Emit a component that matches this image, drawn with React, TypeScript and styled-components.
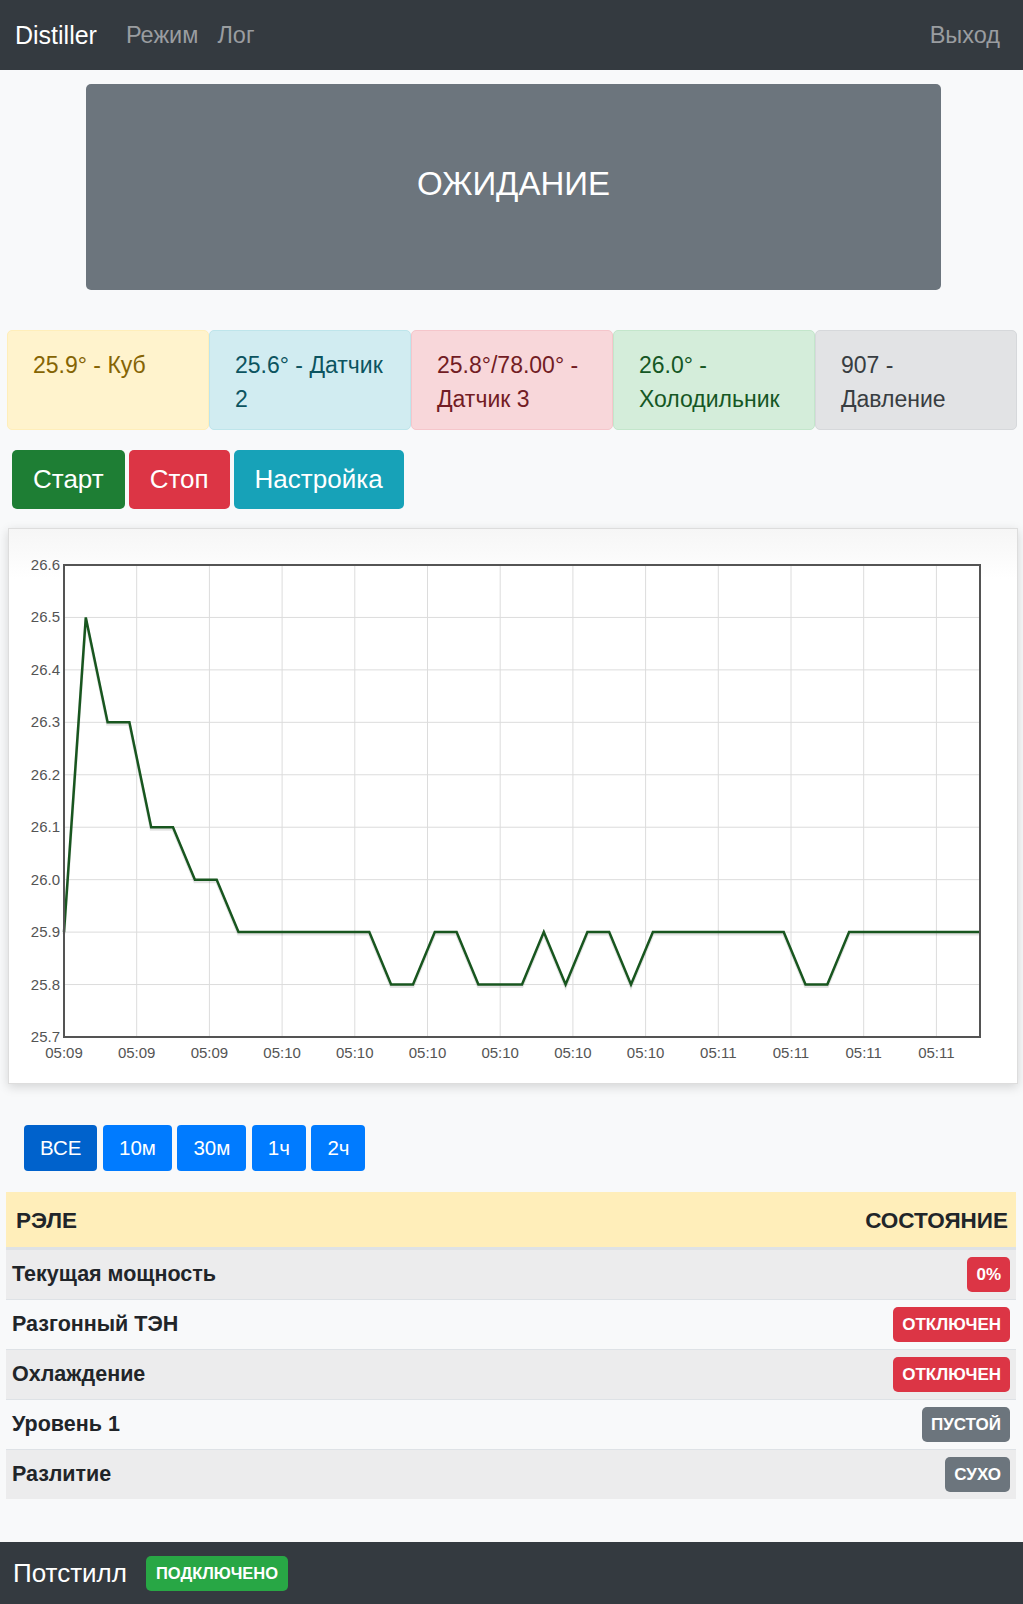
import React from 'react';
import styled, { createGlobalStyle } from 'styled-components';

type Tone = 'warning' | 'info' | 'danger' | 'success' | 'secondary';

const ALERT_COLORS: Record<Tone, { bg: string; border: string; text: string }> = {
  warning: { bg: '#fff3cd', border: '#ffeeba', text: '#856404' },
  info: { bg: '#d1ecf1', border: '#bee5eb', text: '#0c5460' },
  danger: { bg: '#f8d7da', border: '#f5c6cb', text: '#721c24' },
  success: { bg: '#d4edda', border: '#c3e6cb', text: '#155724' },
  secondary: { bg: '#e2e3e5', border: '#d6d8db', text: '#383d41' },
};

const SENSORS: { id: number; text: string; tone: Tone }[] = [
  { id: 1, text: '25.9° - Куб', tone: 'warning' },
  { id: 2, text: '25.6° - Датчик 2', tone: 'info' },
  { id: 3, text: '25.8°/78.00° - Датчик 3', tone: 'danger' },
  { id: 4, text: '26.0° - Холодильник', tone: 'success' },
  { id: 5, text: '907 - Давление', tone: 'secondary' },
];

const RANGES = ['ВСЕ', '10м', '30м', '1ч', '2ч'];

const RELAYS: { name: string; state: string; color: string }[] = [
  { name: 'Текущая мощность', state: '0%', color: '#dc3545' },
  { name: 'Разгонный ТЭН', state: 'Отключен', color: '#dc3545' },
  { name: 'Охлаждение', state: 'Отключен', color: '#dc3545' },
  { name: 'Уровень 1', state: 'Пустой', color: '#6c757d' },
  { name: 'Разлитие', state: 'Сухо', color: '#6c757d' },
];

// temperature history, one point per sample
const SAMPLES = [
  25.9, 26.5, 26.3, 26.3, 26.1, 26.1, 26.0, 26.0,
  25.9, 25.9, 25.9, 25.9, 25.9, 25.9, 25.9,
  25.8, 25.8, 25.9, 25.9, 25.8, 25.8, 25.8, 25.9, 25.8, 25.9, 25.9, 25.8,
  25.9, 25.9, 25.9, 25.9, 25.9, 25.9, 25.9,
  25.8, 25.8,
  25.9, 25.9, 25.9, 25.9, 25.9, 25.9, 25.9,
];

const X_LABELS = [
  '05:09', '05:09', '05:09',
  '05:10', '05:10', '05:10', '05:10', '05:10', '05:10',
  '05:11', '05:11', '05:11', '05:11',
];

const Y_TICKS = [26.6, 26.5, 26.4, 26.3, 26.2, 26.1, 26.0, 25.9, 25.8, 25.7];

const GlobalStyle = createGlobalStyle`
  body {
    margin: 0;
    background: #f8f9fa;
    font-family: "Liberation Sans", Arial, sans-serif;
    color: #212529;
  }
`;

const Navbar = styled.nav`
  display: flex;
  align-items: center;
  height: 70px;
  padding: 0 23px 0 15px;
  background: #343a40;
`;

const Brand = styled.span`
  font-size: 25px;
  color: #fff;
  margin-right: 29px;
`;

const NavLink = styled.span<{ $push?: boolean }>`
  font-size: 23.5px;
  color: #9a9da0;
  margin-right: 19px;
  margin-left: ${(p) => (p.$push ? 'auto' : '0')};
  &:last-child {
    margin-right: 0;
  }
`;

const StatusBox = styled.div`
  width: 855px;
  height: 206px;
  box-sizing: border-box;
  padding-bottom: 7px;
  margin: 14px auto 0 86px;
  display: flex;
  align-items: center;
  justify-content: center;
  background: #6c757d;
  border-radius: 5px;
  color: #fff;
  font-size: 33px;
`;

const SensorRow = styled.div`
  display: grid;
  grid-template-columns: repeat(5, 1fr);
  margin: 40px 6px 0 7px;
`;

const SensorAlert = styled.div<{ $tone: Tone }>`
  height: 100px;
  box-sizing: border-box;
  padding: 17px 12px 0 25px;
  border: 1px solid ${(p) => ALERT_COLORS[p.$tone].border};
  border-radius: 5px;
  background: ${(p) => ALERT_COLORS[p.$tone].bg};
  color: ${(p) => ALERT_COLORS[p.$tone].text};
  font-size: 23px;
  line-height: 34px;
`;

const ButtonRow = styled.div`
  display: flex;
  gap: 4px;
  margin: 20px 0 0 12px;
`;

const ActionButton = styled.button<{ $bg: string }>`
  height: 59px;
  padding: 0 21px;
  border: none;
  border-radius: 5px;
  background: ${(p) => p.$bg};
  color: #fff;
  font-family: inherit;
  font-size: 26px;
`;

const ChartCard = styled.div`
  width: 1010px;
  height: 556px;
  box-sizing: border-box;
  margin: 19px 0 0 8px;
  border: 1px solid #ddd;
  background: linear-gradient(#f6f6f6 0, #fff 50px);
  box-shadow: 0 3px 10px rgba(0, 0, 0, 0.15);
`;

const ChartSvg = styled.svg`
  display: block;
  font-family: "Liberation Sans", Arial, sans-serif;
`;

const RangeRow = styled.div`
  display: flex;
  gap: 5.5px;
  margin: 41px 0 0 24px;
`;

const RangeButton = styled.button<{ $active?: boolean }>`
  height: 46px;
  padding: 0 16px;
  border: none;
  border-radius: 4px;
  background: ${(p) => (p.$active ? '#0062cc' : '#007bff')};
  color: #fff;
  font-family: inherit;
  font-size: 20.5px;
`;

const RelayTable = styled.div`
  margin: 21px 7px 0 6px;
`;

const HeadRow = styled.div`
  display: flex;
  align-items: center;
  justify-content: space-between;
  height: 53px;
  padding: 2px 8px 0 10px;
  background: #ffeeba;
  border-bottom: 2px solid #dee2e6;
  font-size: 22.5px;
  font-weight: bold;
  text-transform: uppercase;
`;

const BodyRow = styled.div<{ $odd: boolean }>`
  display: flex;
  align-items: center;
  justify-content: space-between;
  height: 49px;
  padding: 0 6px;
  border-top: 1px solid #dee2e6;
  background: ${(p) => (p.$odd ? '#ececed' : '#f8f9fa')};
  font-size: 21.5px;
  font-weight: bold;
  &:first-of-type {
    border-top: none;
  }
`;

const Badge = styled.span<{ $bg: string }>`
  display: inline-flex;
  align-items: center;
  height: 35px;
  padding: 0 9px;
  border-radius: 5px;
  background: ${(p) => p.$bg};
  color: #fff;
  font-size: 17px;
  font-weight: bold;
  text-transform: uppercase;
`;

const Footer = styled.footer`
  display: flex;
  align-items: center;
  gap: 19px;
  height: 63px;
  margin-top: 43px;
  padding: 0 13px;
  background: #343a40;
  color: #fff;
  font-size: 26px;
`;

const ConnBadge = styled.span`
  display: inline-flex;
  align-items: center;
  height: 35px;
  padding: 0 10px;
  border-radius: 5px;
  background: #28a745;
  font-size: 16.5px;
  font-weight: bold;
  text-transform: uppercase;
`;

const W = 1008;
const H = 554;
const PL = 55;
const PT = 36;
const PW = 916;
const PH = 472;

const yOf = (v: number) => PT + ((26.6 - v) / 0.9) * PH;
const xOf = (i: number) => PL + (i * PW) / (SAMPLES.length - 1);

const TempChart = () => {
  const pts = SAMPLES.map((v, i) => `${xOf(i).toFixed(1)},${yOf(v).toFixed(1)}`).join(' ');
  const step = 72.7;
  return (
    <ChartSvg width={W} height={H} viewBox={`0 0 ${W} ${H}`}>
      <rect x={PL} y={PT} width={PW} height={PH} fill="#fff" />
      {Y_TICKS.map((t) => (
        <line key={t} x1={PL} x2={PL + PW} y1={yOf(t)} y2={yOf(t)} stroke="#dcdcdc" strokeWidth={1} />
      ))}
      {X_LABELS.map((_, k) => (
        <line key={k} x1={PL + k * step} x2={PL + k * step} y1={PT} y2={PT + PH} stroke="#dcdcdc" strokeWidth={1} />
      ))}
      <polyline points={pts} fill="none" stroke="rgba(0,0,0,0.1)" strokeWidth={3} transform="translate(0,2)" />
      <polyline points={pts} fill="none" stroke="#18561f" strokeWidth={2.5} strokeLinejoin="miter" />
      <rect x={PL} y={PT} width={PW} height={PH} fill="none" stroke="#545454" strokeWidth={2} />
      {Y_TICKS.map((t) => (
        <text key={t} x={PL - 4} y={yOf(t) + 5} textAnchor="end" fontSize={15} fill="#545454">
          {t.toFixed(1)}
        </text>
      ))}
      {X_LABELS.map((l, k) => (
        <text key={k} x={PL + k * step} y={529} textAnchor="middle" fontSize={15} fill="#545454">
          {l}
        </text>
      ))}
    </ChartSvg>
  );
};

const App = () => {
  return (
    <>
      <GlobalStyle />
      <Navbar>
        <Brand>Distiller</Brand>
        <NavLink>Режим</NavLink>
        <NavLink>Лог</NavLink>
        <NavLink $push>Выход</NavLink>
      </Navbar>

      <StatusBox>ОЖИДАНИЕ</StatusBox>

      <SensorRow>
        {SENSORS.map((s) => (
          <SensorAlert key={s.id} $tone={s.tone}>
            {s.text}
          </SensorAlert>
        ))}
      </SensorRow>

      <ButtonRow>
        <ActionButton $bg="#1e7e34">Старт</ActionButton>
        <ActionButton $bg="#dc3545">Стоп</ActionButton>
        <ActionButton $bg="#17a2b8">Настройка</ActionButton>
      </ButtonRow>

      <ChartCard>
        <TempChart />
      </ChartCard>

      <RangeRow>
        {RANGES.map((r, i) => (
          <RangeButton key={r} $active={i === 0}>
            {r}
          </RangeButton>
        ))}
      </RangeRow>

      <RelayTable>
        <HeadRow>
          <span>Рэле</span>
          <span>Состояние</span>
        </HeadRow>
        {RELAYS.map((r, i) => (
          <BodyRow key={r.name} $odd={i % 2 === 0}>
            <span>{r.name}</span>
            <Badge $bg={r.color}>{r.state}</Badge>
          </BodyRow>
        ))}
      </RelayTable>

      <Footer>
        <span>Потстилл</span>
        <ConnBadge>Подключено</ConnBadge>
      </Footer>
    </>
  );
};

export default App;
